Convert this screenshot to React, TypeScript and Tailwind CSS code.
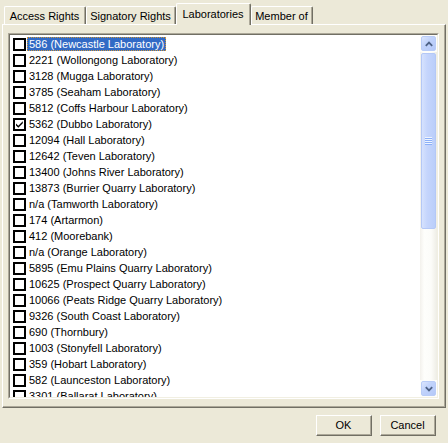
import React from "react";

const items = [
  "586 (Newcastle Laboratory)",
  "2221 (Wollongong Laboratory)",
  "3128 (Mugga Laboratory)",
  "3785 (Seaham Laboratory)",
  "5812 (Coffs Harbour Laboratory)",
  "5362 (Dubbo Laboratory)",
  "12094 (Hall Laboratory)",
  "12642 (Teven Laboratory)",
  "13400 (Johns River Laboratory)",
  "13873 (Burrier Quarry Laboratory)",
  "n/a (Tamworth Laboratory)",
  "174 (Artarmon)",
  "412 (Moorebank)",
  "n/a (Orange Laboratory)",
  "5895 (Emu Plains Quarry Laboratory)",
  "10625 (Prospect Quarry Laboratory)",
  "10066 (Peats Ridge Quarry Laboratory)",
  "9326 (South Coast Laboratory)",
  "690 (Thornbury)",
  "1003 (Stonyfell Laboratory)",
  "359 (Hobart Laboratory)",
  "582 (Launceston Laboratory)",
  "3301 (Ballarat Laboratory)",
];

function Tab({ label, w, selected }: { label: string; w: string; selected?: boolean }) {
  if (selected) {
    return (
      <div className={`${w} h-[22px] -mb-px relative z-10 bg-[#ECE9D8] border-l border-t border-white rounded-tl-[2px] rounded-tr-[2px] border-r border-r-[#716F64]`}>
        <div className="h-full border-r border-[#ACA899] flex justify-center pt-[4px]">{label}</div>
      </div>
    );
  }
  return (
    <div className={`${w} h-[18px] bg-[#ECE9D8] border-l border-t border-white rounded-tl-[2px] rounded-tr-[2px] border-r border-r-[#716F64]`}>
      <div className="h-full border-r border-[#ACA899] flex justify-center pt-[3px]">{label}</div>
    </div>
  );
}

function Checkbox({ checked }: { checked?: boolean }) {
  return (
    <div className="w-[13px] h-[13px] shrink-0 border-2 border-black bg-white flex items-center justify-center">
      {checked && (
        <svg width="9" height="9" viewBox="0 0 9 9">
          <path d="M1 3.5 L3.3 5.8 L7.8 1.2 L7.8 3.3 L3.3 7.8 L1 5.5 Z" fill="#000" />
        </svg>
      )}
    </div>
  );
}

function Row({ text, selected, checked }: { text: string; selected?: boolean; checked?: boolean }) {
  return (
    <div className="h-[16px] flex items-center pl-[3px] whitespace-nowrap">
      <Checkbox checked={checked} />
      {selected ? (
        <span className="ml-[1px] h-[14px] px-[1px] flex items-center bg-[#316AC5] text-white border border-dotted border-[#CE953A]">
          {text}
        </span>
      ) : (
        <span className="ml-[1px] h-[14px] px-[2px] flex items-center">{text}</span>
      )}
    </div>
  );
}

function ArrowBtn({ up }: { up?: boolean }) {
  return (
    <div className="h-[17px] p-[1px] bg-[#FDFDFA]">
      <div className="h-full rounded-[2px] border border-[#B9CCF7] bg-[linear-gradient(135deg,#DCE6FD,#C1D3FB_40%,#B4C8F8)] flex items-center justify-center">
        <svg width="8" height="6" viewBox="0 0 8 6">
          {up ? (
            <path d="M0.8 4.8 L4 1.6 L7.2 4.8" stroke="#4D6185" strokeWidth="1.8" fill="none" />
          ) : (
            <path d="M0.8 1.2 L4 4.4 L7.2 1.2" stroke="#4D6185" strokeWidth="1.8" fill="none" />
          )}
        </svg>
      </div>
    </div>
  );
}

function Scrollbar() {
  return (
    <div className="w-[17px] shrink-0 flex flex-col bg-[linear-gradient(to_right,#F3F1EC,#FEFEFB_25%,#FCFCF9_65%,#EEEDE5)]">
      <ArrowBtn up />
      <div className="h-[177px] px-[1px] pt-[1px]">
        <div className="h-full rounded-[2px] border border-[#B4C8F6] bg-[linear-gradient(to_right,#D6E2FD,#C5D5FC_40%,#BACEFA)] flex items-center justify-center">
          <div className="flex flex-col w-[7px]">
            <div className="h-px bg-[#EEF4FE]" />
            <div className="h-px bg-[#8CB0F8]" />
            <div className="h-px bg-[#EEF4FE]" />
            <div className="h-px bg-[#8CB0F8]" />
            <div className="h-px bg-[#EEF4FE]" />
            <div className="h-px bg-[#8CB0F8]" />
            <div className="h-px bg-[#EEF4FE]" />
            <div className="h-px bg-[#8CB0F8]" />
          </div>
        </div>
      </div>
      <div className="flex-1" />
      <ArrowBtn />
    </div>
  );
}

function Button({ label }: { label: string }) {
  return (
    <div className="w-[56px] h-[21px] border-l border-t border-white border-r border-b border-r-[#716F64] border-b-[#716F64]">
      <div className="h-full border-r border-b border-[#ACA899] flex items-center justify-center">{label}</div>
    </div>
  );
}

export default function App() {
  return (
    <div className="w-[448px] h-[443px] bg-[#ECE9D8] px-[2px] flex flex-col font-['Liberation_Sans',Arial,sans-serif] text-[11px] leading-[13px] text-black select-none overflow-hidden">
      <div className="h-[24px] shrink-0 flex items-end pl-[2px]">
        <Tab w="w-[82px]" label="Access Rights" />
        <Tab w="w-[90px]" label="Signatory Rights" />
        <Tab w="w-[75px]" label="Laboratories" selected />
        <Tab w="w-[62px]" label="Member of" />
      </div>
      <div className="h-[384px] shrink-0 flex border-l border-t border-white border-r border-b border-r-[#716F64] border-b-[#716F64]">
        <div className="flex-1 flex border-r border-b border-[#ACA899] pl-[5px] pt-[8px] pr-[5px] pb-[7px]">
          <div className="flex-1 flex border border-t-[#ACA899] border-l-[#ACA899] border-r-white border-b-white">
            <div className="flex-1 flex border border-t-[#716F64] border-l-[#716F64] border-r-[#F1EFE2] border-b-[#F1EFE2] bg-white overflow-hidden">
              <div className="flex-1 pt-px overflow-hidden">
                {items.map((t, i) => (
                  <Row key={i} text={t} selected={i === 0} checked={i === 5} />
                ))}
              </div>
              <Scrollbar />
            </div>
          </div>
        </div>
      </div>
      <div className="flex justify-end gap-[8px] pr-[10px] pt-[7px]">
        <Button label="OK" />
        <Button label="Cancel" />
      </div>
    </div>
  );
}
